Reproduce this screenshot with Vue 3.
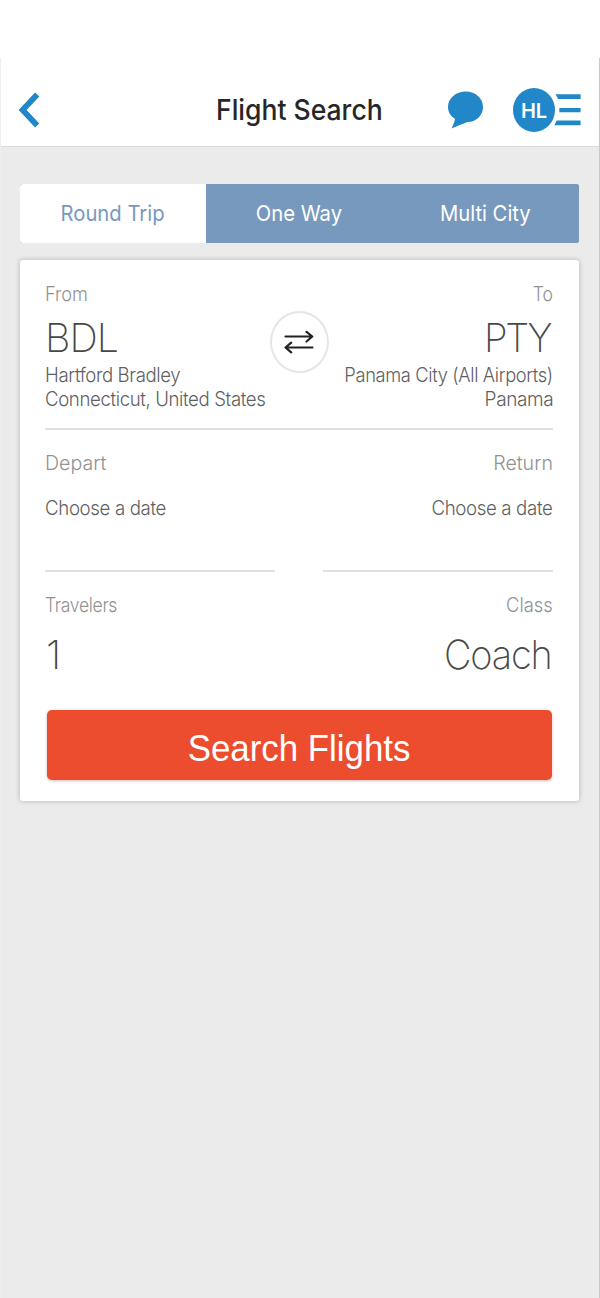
<script setup>
import { ref } from 'vue'

const tabs = ['Round Trip', 'One Way', 'Multi City']
const active = ref(0)
</script>

<template>
  <div class="screen">
    <div class="status"></div>
    <div class="body">
      <header class="header">
        <svg class="back" width="22" height="36" viewBox="0 0 22 36">
          <path d="M19.200 2.500 L4.600 18 L19.200 33.500" fill="none" stroke="#2187c8" stroke-width="5.8" />
        </svg>
        <h1 class="title"><span>Flight Search</span></h1>
        <svg class="chat" width="38" height="40" viewBox="0 0 38 40">
          <path d="M18.700 1.500C28.500 1.500 36 8 36 17C36 25.700 29 32 20.500 32C18.500 32.500 15 34.500 4.500 38.500C6.500 35 7.500 31.500 8 28.800C3.500 26 1 22 1 17C1 8 9 1.500 18.700 1.500Z" fill="#2187c8" />
        </svg>
        <div class="profile">
          <div class="avatar"><span>HL</span></div>
          <svg class="menu" width="27" height="34" viewBox="0 0 27 34">
            <path d="M1.500 1.200H26.600V6H4Q3 3.500 1.500 1.200ZM5.300 15H26.600V19.300H5.300ZM2.600 27.500H26.600V32.200H0.300Q1.700 30 2.600 27.500Z" fill="#2187c8" />
          </svg>
        </div>
      </header>

      <nav class="tabs">
        <button v-for="(t, i) in tabs" :key="t" class="tab" :class="{ active: i === active }" @click="active = i">
          <span>{{ t }}</span>
        </button>
      </nav>

      <main class="card">
        <section class="route">
          <div class="col">
            <span class="label from">From</span>
            <span class="code bdl">BDL</span>
            <span class="place hartford">Hartford Bradley</span>
            <span class="place hartford">Connecticut, United States</span>
          </div>
          <button class="swap" aria-label="Swap airports">
            <svg width="30" height="24" viewBox="0 0 30 24">
              <g fill="none" stroke="#222" stroke-width="2.200" stroke-linecap="round" stroke-linejoin="round">
                <path d="M1.500 6.500H28M22.500 1.800L28.300 6.500L22.500 11.500" />
                <path d="M28.500 17.500H2M7.200 12.700L1.500 17.500L7.200 22.300" />
              </g>
            </svg>
          </button>
          <div class="col right">
            <span class="label to">To</span>
            <span class="code pty">PTY</span>
            <span class="place panama-city">Panama City (All Airports)</span>
            <span class="place panama">Panama</span>
          </div>
        </section>

        <section class="dates">
          <div class="date">
            <span class="label depart">Depart</span>
            <span class="place choose">Choose a date</span>
          </div>
          <div class="date right">
            <span class="label depart">Return</span>
            <span class="place choose">Choose a date</span>
          </div>
        </section>

        <section class="options">
          <div class="col">
            <span class="label travelers">Travelers</span>
            <span class="code one">1</span>
          </div>
          <div class="col right">
            <span class="label class-label">Class</span>
            <span class="code coach">Coach</span>
          </div>
        </section>

        <button class="search"><span>Search Flights</span></button>
      </main>
    </div>
  </div>
</template>

<style>
body {
  margin: 0;
  background: #ebebeb;
}
</style>

<style scoped>
.screen {
  width: 600px;
  height: 1298px;
  background: #ebebeb;
  font-family: Inter, "Liberation Sans", sans-serif;
  overflow: hidden;
}
.status {
  height: 58px;
  background: #fff;
}
.body {
  box-sizing: border-box;
  height: 1240px;
  border-left: 1px solid #eeeeee;
  border-right: 1px solid #c9c9cb;
}
button {
  border: 0;
  padding: 0;
  margin: 0;
  font: inherit;
  cursor: pointer;
}
.header {
  box-sizing: border-box;
  height: 89px;
  padding: 15px 17px 0 17px;
  border-bottom: 1px solid #d9d9d9;
  background: #fff;
  display: flex;
  align-items: center;
}
.back {
  flex: none;
}
.title {
  flex: none;
  width: 168px;
  margin: 0 0 0 176px;
  color: #262626;
  font-size: 28px;
  font-weight: 500;
  line-height: 40px;
  white-space: nowrap;
}
.title span,
.tab span,
.label,
.code,
.place,
.search span {
  display: inline-block;
  transform-origin: left center;
  white-space: nowrap;
}
.title span {
  transform: scaleX(0.948);
}
.chat {
  flex: none;
  margin-left: 63px;
}
.profile {
  display: flex;
  align-items: center;
  margin-left: 28px;
}
.avatar {
  width: 42px;
  height: 44px;
  border-radius: 50%;
  background: #2187c8;
  color: #fff;
  font-size: 20px;
  font-weight: 600;
  line-height: 46px;
  text-align: center;
}
.menu {
  flex: none;
  margin-left: -1px;
}
.tabs {
  display: flex;
  width: 559px;
  height: 59px;
  margin: 37px 0 0 19px;
  border-radius: 3px;
  background: #7799bd;
  overflow: hidden;
}
.tab {
  flex: 1;
  padding-right: 2px;
  background: #7799bd;
  color: #fff;
  font-size: 22px;
  font-weight: 400;
  line-height: 59px;
  text-align: center;
}
.tab.active {
  background: #fff;
  color: #7799bd;
}
.tab span {
  transform-origin: center;
  transform: scaleX(0.92);
}
.card {
  box-sizing: border-box;
  width: 559px;
  height: 541px;
  margin: 17px 0 0 19px;
  padding: 22px 26px 0 25px;
  border-radius: 3px;
  background: #fff;
  box-shadow: 0 0 5px rgba(0, 0, 0, 0.25);
}
.route {
  display: flex;
  justify-content: space-between;
  box-sizing: border-box;
  height: 148px;
  border-bottom: 2px solid #e0e0e0;
}
.col,
.date {
  display: flex;
  flex-direction: column;
  align-items: flex-start;
  width: 222px;
}
.right {
  align-items: flex-end;
}
.right > span {
  transform-origin: right center;
}
.label {
  color: #929292;
  font-size: 20px;
  font-weight: 300;
  line-height: 24px;
}
.code {
  color: #484848;
  font-size: 40px;
  font-weight: 200;
  line-height: 44px;
}
.route .code {
  margin: 10px 0 4px;
}
.place {
  color: #5f5f5f;
  font-size: 20px;
  font-weight: 300;
  line-height: 23.5px;
  letter-spacing: -0.4px;
}
.from {
  transform: scaleX(0.91);
}
.to {
  transform: scaleX(0.88);
}
.bdl {
  letter-spacing: -1px;
  transform: scaleX(0.985);
}
.route .pty {
  margin-right: 3px;
  letter-spacing: -2.5px;
  transform: scaleX(0.955);
}
.hartford {
  transform: scaleX(0.931);
}
.panama-city {
  transform: scaleX(0.915);
}
.panama {
  transform: scaleX(0.95);
}
.depart {
  transform: scaleX(0.98);
}
.choose {
  transform: scaleX(0.935);
}
.right .choose {
  margin-right: 1px;
}
.travelers {
  letter-spacing: -0.4px;
  transform: scaleX(0.88);
}
.class-label {
  transform: scaleX(0.92);
}
.one {
  margin-left: 1px;
}
.coach {
  letter-spacing: -1.2px;
  margin-right: 1px;
  transform: scaleX(0.947);
}
.swap {
  box-sizing: border-box;
  flex: none;
  display: flex;
  align-items: center;
  justify-content: center;
  width: 59px;
  height: 62px;
  margin-top: 29px;
  border: 2px solid #e6e6e6;
  border-radius: 50%;
  background: #fff;
}
.dates {
  display: flex;
  justify-content: space-between;
}
.date {
  box-sizing: border-box;
  width: 230px;
  height: 142px;
  padding-top: 21px;
  border-bottom: 2px solid #e0e0e0;
}
.date .place {
  margin-top: 22px;
}
.options {
  display: flex;
  justify-content: space-between;
  padding-top: 21px;
}
.options .code {
  margin-top: 16px;
}
.search {
  display: block;
  width: 505px;
  height: 70px;
  margin: 33px 0 0 2px;
  border-radius: 5px;
  background: #ed4d2f;
  box-shadow: 0 1px 3px rgba(120, 60, 40, 0.35);
  color: #fff;
  font-family: "Liberation Sans", Arial, sans-serif;
  font-size: 36px;
  line-height: 78px;
  text-align: center;
}
.search span {
  transform-origin: center;
  transform: scaleX(0.968);
}
</style>
